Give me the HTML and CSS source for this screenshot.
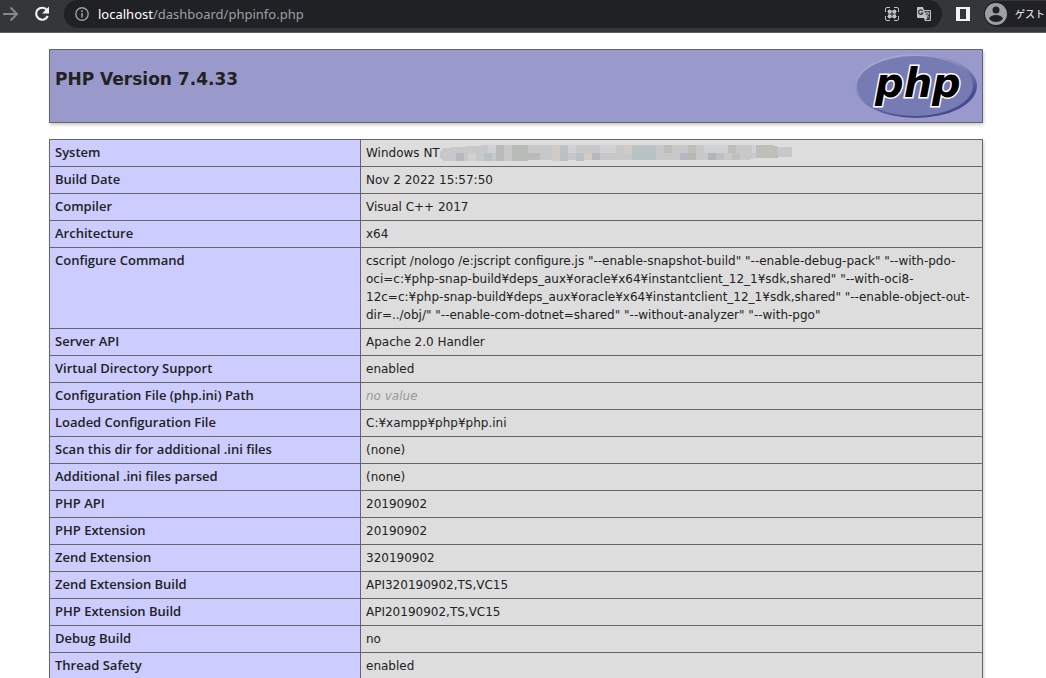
FILE: index.html
```html
<!DOCTYPE html>
<html lang="en">
<head>
<meta charset="utf-8">
<title>PHP 7.4.33 - phpinfo()</title>
<link rel="stylesheet" href="styles.css">
</head>
<body>
<header class="toolbar">
  <button class="nav-button forward" aria-label="Forward"><svg width="16" height="16" viewBox="0 0 16 16" fill="none" stroke="currentColor" stroke-width="2"><path d="M0 8h13M7.500 1.500L14 8l-6.500 6.500"/></svg></button>
  <button class="nav-button reload" aria-label="Reload"><svg width="16" height="16" viewBox="0 0 16 16"><path d="M13 4.200A6 6 0 1 0 13.700 10" fill="none" stroke="currentColor" stroke-width="2.200"/><path d="M15 0.500V7.500H8z" fill="currentColor"/></svg></button>
  <div class="address">
    <svg class="info" width="14" height="14" viewBox="0 0 14 14"><circle cx="7" cy="7" r="6.200" fill="none" stroke="currentColor" stroke-width="1.400"/><path d="M6.200 6h1.600v4.500H6.200zM6.200 3.300h1.600v1.600H6.200z" fill="currentColor"/></svg>
    <a class="url" href="#"><span class="host">localhost</span>/dashboard/phpinfo.php</a>
    <button class="address-button" aria-label="QR code"><svg width="16" height="16" viewBox="0 0 16 16"><path d="M1.500 6V3q0-1.500 1.500-1.500h3M10 1.500H13q1.500 0 1.500 1.500v3M14.500 10V13q0 1.500-1.500 1.500h-3M6 14.500H3q-1.500 0-1.500-1.500v-3" fill="none" stroke="currentColor"/><path d="M4 4h3.500v3.500H4zM8.500 4H12v3.500H8.500zM4 8.500h3.500V12H4zM8.500 8.500H12V12H8.500z" fill="currentColor"/><path d="M3 5.500h10M3 10.500h10M5.500 3v10M10.500 3v10" stroke="currentColor" stroke-opacity="0.6"/></svg></button>
    <button class="address-button" aria-label="Translate"><svg width="16" height="16" viewBox="0 0 16 16"><path d="M1.500 1H7l1 3h6q1 0 1 1v9q0 1-1 1H9l-1.200-3H2q-1 0-1-1V2q0-1 .5-1z" fill="#bdc1c6"/><path d="M8.300 5H14v9H9.500l2-2z" fill="#35363a"/><path d="M6.800 4.800A2.300 2.300 0 1 0 7 7H4.800" fill="none" stroke="#35363a" stroke-width="1.200"/><path d="M9 7h4.500M11.200 5.800V7M12.700 7Q12 10 9.500 11M10 8.500l3 3" fill="none" stroke="#bdc1c6"/></svg></button>
  </div>
  <button class="nav-button panel" aria-label="Side panel"><svg width="14" height="14" viewBox="0 0 14 14"><path d="M0 0h14v14H0zM4 2v10h6V2z" fill="#f1f3f4" fill-rule="evenodd"/></svg></button>
  <button class="profile"><svg width="22" height="22" viewBox="0 0 22 22"><circle cx="11" cy="11" r="11" fill="#9aa0a6"/><circle cx="11" cy="7" r="3.500" fill="#202124"/><path d="M4 15.500Q5.500 12 11 12t7 3.500Q15.500 19 11 19t-7-3.500z" fill="#202124"/></svg><span>ゲスト</span></button>
</header>
<main class="page">
  <div class="banner">
    <h1>PHP Version 7.4.33</h1>
    <svg class="logo" width="122" height="64" viewBox="0 0 122 64" role="img" aria-label="PHP logo">
      <defs><linearGradient id="rim" x1="0.2" y1="0" x2="0.8" y2="1"><stop offset="0" stop-color="#b0b2d8"/><stop offset="0.45" stop-color="#8084bb"/><stop offset="0.8" stop-color="#484a90"/></linearGradient></defs>
      <ellipse cx="61" cy="32" rx="61" ry="32" fill="url(#rim)"/>
      <ellipse cx="60" cy="32" rx="58" ry="30" fill="#777bb3"/>
      <text class="logo-text" x="20" y="43">php</text>
    </svg>
  </div>
  <table class="info-table">
    <tbody>
      <tr><th scope="row">System</th><td><div class="system">Windows NT<svg class="mosaic" width="352" height="16" viewBox="0 0 352 16" shape-rendering="crispEdges" aria-hidden="true">
        <path d="M3 3L48 0H332l6 2h14v10h-35l-8 3H84l-6 1H3l-3-4V6z" fill="#c8c8c8"/>
        <path d="M16 8h8v8h-8zM240 8h8v7h-8zM152 8h8v7h-8z" fill="#b9b6bf"/>
        <path d="M28 8h8v8h-8zM48 0h8v8h-8zM128 0h8v8h-8zM264 0h24v8h-24zM312 0h8v8h-8zM160 0h16v8h-16z" fill="#d0d1d2"/>
        <path d="M44 8h8v8h-8zM120 8h8v8h-8zM136 8h8v8h-8zM192 8h16v7h-16zM208 8h8v7h-8z" fill="#b8c1c3"/>
        <path d="M56 0h8v16h-8zM72 0h16v16H72zM88 8h12v7H88z" fill="#b9bbb9"/>
        <path d="M112 0h8v16h-8zM144 8h8v7h-8zM184 0h8v8h-8z" fill="#d0cbc4"/>
        <path d="M120 0h8v8h-8zM192 0h16v8h-16zM208 0h8v8h-8z" fill="#bcc3c4"/>
        <path d="M224 0h8v8h-8zM248 0h8v8h-8zM288 0h8v8h-8zM316 0h16l6 2v11h-22z" fill="#bfbfba"/>
        <path d="M248 8h8v7h-8z" fill="#bbb5b4"/>
        <path d="M268 8h8v7h-8z" fill="#b0b5b8"/>
        <path d="M276 8h8v7h-8zM292 8h8v7h-8z" fill="#bfc0c0"/>
      </svg></div></td></tr>
      <tr><th scope="row">Build Date</th><td>Nov 2 2022 15:57:50</td></tr>
      <tr><th scope="row">Compiler</th><td>Visual C++ 2017</td></tr>
      <tr><th scope="row">Architecture</th><td>x64</td></tr>
      <tr><th scope="row">Configure Command</th><td>cscript /nologo /e:jscript configure.js "--enable-snapshot-build" "--enable-debug-pack" "--with-pdo-oci=c:¥php-snap-build¥deps_aux¥oracle¥x64¥instantclient_12_1¥sdk,shared" "--with-oci8-<wbr><span class="path">12c=c:¥php</span>-snap-build¥deps_aux¥oracle¥x64¥instantclient_12_1¥sdk,shared" "--enable-object-out-dir=../obj/" "--enable-com-dotnet=shared" "--without-analyzer" "--with-pgo"</td></tr>
      <tr><th scope="row">Server API</th><td>Apache 2.0 Handler</td></tr>
      <tr><th scope="row">Virtual Directory Support</th><td>enabled</td></tr>
      <tr><th scope="row">Configuration File (php.ini) Path</th><td><i>no value</i></td></tr>
      <tr><th scope="row">Loaded Configuration File</th><td>C:¥xampp¥php¥php.ini</td></tr>
      <tr><th scope="row">Scan this dir for additional .ini files</th><td>(none)</td></tr>
      <tr><th scope="row">Additional .ini files parsed</th><td>(none)</td></tr>
      <tr><th scope="row">PHP API</th><td>20190902</td></tr>
      <tr><th scope="row">PHP Extension</th><td>20190902</td></tr>
      <tr><th scope="row">Zend Extension</th><td>320190902</td></tr>
      <tr><th scope="row">Zend Extension Build</th><td>API320190902,TS,VC15</td></tr>
      <tr><th scope="row">PHP Extension Build</th><td>API20190902,TS,VC15</td></tr>
      <tr><th scope="row">Debug Build</th><td>no</td></tr>
      <tr><th scope="row">Thread Safety</th><td>enabled</td></tr>
    </tbody>
  </table>
</main>
</body>
</html>
```
FILE: styles.css
```css
* { box-sizing: border-box; }
html { overflow: hidden; }
body {
  margin: 0;
  background: #fff;
  color: #222;
  font: 12px/18px "DejaVu Sans", sans-serif;
}
button {
  display: flex;
  align-items: center;
  padding: 0;
  border: 0;
  background: none;
  color: inherit;
}
.toolbar {
  display: flex;
  align-items: flex-start;
  height: 33px;
  overflow: hidden;
  background: #35363a;
  border-bottom: 1px solid #5f6165;
}
.nav-button { height: 28px; }
.forward { width: 34px; padding-left: 3px; color: #87888b; }
.reload { width: 30px; color: #f1f3f4; }
.address {
  flex: 1;
  display: flex;
  align-items: center;
  gap: 16px;
  height: 28px;
  padding: 0 10px 0 11px;
  border-radius: 14px;
  background: #202124;
  color: #9aa0a6;
}
.url {
  flex: 1;
  margin-left: -7px;
  color: #9aa0a6;
  font: 13px/20px "Noto Sans", sans-serif;
  text-decoration: none;
}
.host { color: #fff; }
.address-button { color: #bdc1c6; }
.panel { width: 42px; justify-content: center; }
.profile {
  gap: 8px;
  height: 26px;
  margin-top: 1px;
  padding: 0 1px;
  border-radius: 13px 0 0 13px;
  background: #202124;
  color: #fff;
  font: 10px/18px "Noto Sans CJK JP", sans-serif;
}
.page { margin: 16px 63px 0 49px; }
.banner {
  display: flex;
  align-items: flex-start;
  justify-content: space-between;
  padding: 4px 5px;
  border: 1px solid #666;
  background: #99c;
  box-shadow: 1px 2px 3px #ccc;
}
.banner h1 {
  margin: 13px 0 0;
  font: bold 17px/24px "DejaVu Sans", sans-serif;
}
.logo { display: block; }
.logo-text {
  font: italic bold 40px "DejaVu Sans", sans-serif;
  fill: #000;
  stroke: #fff;
  stroke-width: 3px;
  paint-order: stroke;
}
.info-table {
  width: 100%;
  margin: 16px 0;
  border-collapse: collapse;
  box-shadow: 1px 2px 3px #ccc;
}
.info-table th, .info-table td {
  padding: 4px 5px;
  border: 1px solid #666;
  text-align: left;
  vertical-align: top;
}
.info-table th {
  width: 311px;
  padding: 3px 5px 5px;
  background: #ccf;
  font: 600 13px/18px "Open Sans", sans-serif;
}
.info-table td { background: #ddd; overflow-wrap: break-word; }
.info-table i { color: #999; }
.path { white-space: nowrap; }
.system { display: flex; align-items: center; }
.mosaic { flex: 0 1 auto; }
```
